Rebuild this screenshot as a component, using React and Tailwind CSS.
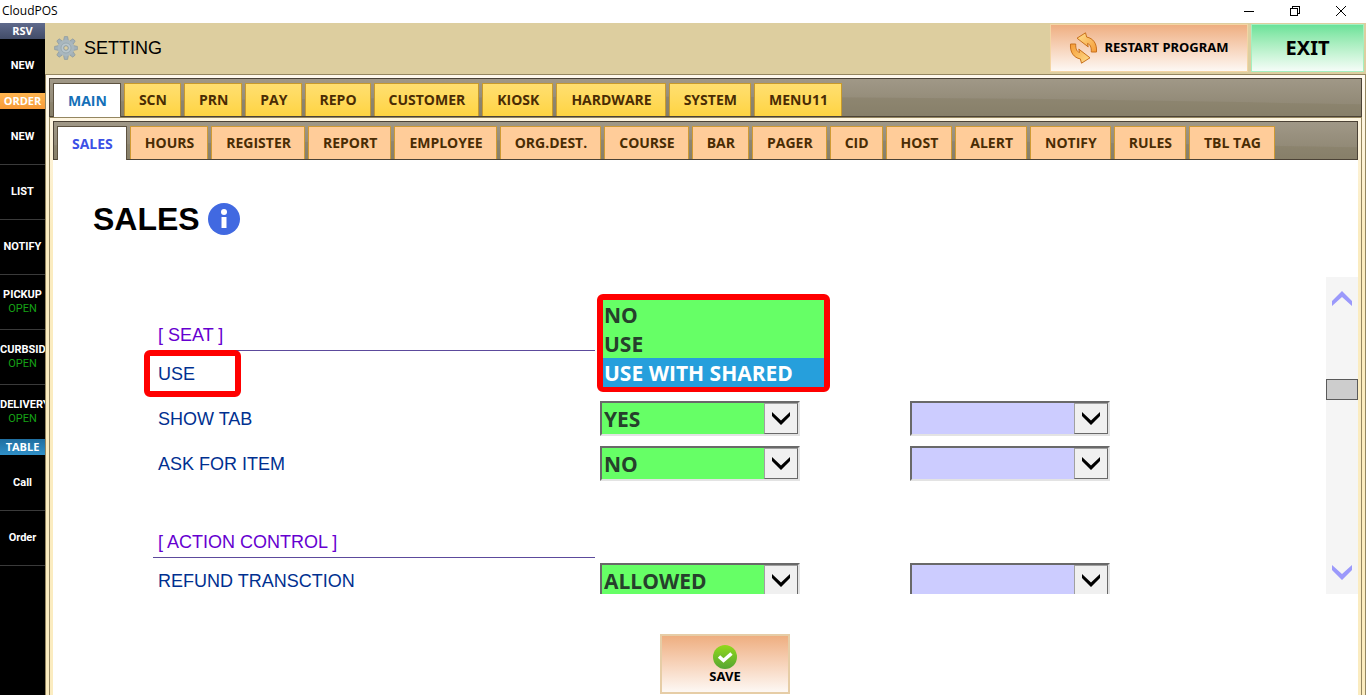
import React from "react";

const sideItems = [
  { header: "RSV", tone: "bg-linear-to-b from-[#5f6a8c] to-[#424c68]" },
  { label: "NEW", short: true, first: true },
  { header: "ORDER", tone: "bg-linear-to-b from-[#ffb54f] to-[#f79a38]" },
  { label: "NEW", first: true },
  { label: "LIST" },
  { label: "NOTIFY" },
  { label: "PICKUP", status: "OPEN" },
  { label: "CURBSIDE", status: "OPEN", wide: true },
  { label: "DELIVERY", status: "OPEN", wide: true },
  { header: "TABLE", tone: "bg-linear-to-b from-[#1f6ea0] to-[#3090c8]" },
  { label: "Call", first: true },
  { label: "Order" },
];

const mainTabs = ["MAIN", "SCN", "PRN", "PAY", "REPO", "CUSTOMER", "KIOSK", "HARDWARE", "SYSTEM", "MENU11"];

const subTabs = [
  "SALES", "HOURS", "REGISTER", "REPORT", "EMPLOYEE", "ORG.DEST.", "COURSE", "BAR",
  "PAGER", "CID", "HOST", "ALERT", "NOTIFY", "RULES", "TBL TAG",
];

function TitleBar() {
  return (
    <div className="flex h-[23px] shrink-0 items-start justify-between bg-white pr-0.5 pl-0.5 font-['Open_Sans',sans-serif] text-xs leading-[22px] text-black">
      <span>CloudPOS</span>
      <div className="flex h-[21px] items-center">
        <button aria-label="Minimize" className="flex h-full w-[46px] items-center justify-center">
          <svg width="10" height="10" viewBox="0 0 10 10" shapeRendering="crispEdges"><path d="M0 5.5h10" stroke="#000" /></svg>
        </button>
        <button aria-label="Restore" className="flex h-full w-[46px] items-center justify-center">
          <svg width="10" height="10" viewBox="0 0 10 10" fill="none" stroke="#000" shapeRendering="crispEdges">
            <path d="M.5 2.5h7v7h-7zM2.5 2.5v-2h7v7h-2" />
          </svg>
        </button>
        <button aria-label="Close" className="flex h-full w-[46px] items-center justify-center">
          <svg width="10" height="10" viewBox="0 0 10 10" stroke="#000"><path d="M0 0l10 10M10 0L0 10" /></svg>
        </button>
      </div>
    </div>
  );
}

function Sidebar() {
  return (
    <nav className="w-[45px] shrink-0 overflow-hidden bg-black text-center font-['Roboto',sans-serif] text-[11px] leading-[14px] font-bold text-white">
      {sideItems.map((item, i) =>
        item.header ? (
          <div key={i} className={`h-4 font-['Open_Sans',sans-serif] leading-4 ${item.tone}`}>{item.header}</div>
        ) : (
          <button
            key={i}
            className={`flex w-full flex-col justify-center font-bold ${item.wide ? "items-start" : "items-center"} ${item.short ? "h-[54px]" : "h-[55px]"} ${item.first ? "" : "border-t border-[#3a3a3a]"}`}
          >
            <span>{item.label}</span>
            {item.status && <span className="w-full text-center font-normal text-[#16a016]">{item.status}</span>}
          </button>
        )
      )}
      <div className="border-t border-[#3a3a3a]" />
    </nav>
  );
}

function GearIcon() {
  const teeth = [0, 45, 90, 135, 180, 225, 270, 315];
  return (
    <svg width="24" height="24" viewBox="0 0 24 24">
      <g fill="#a3b1b8" stroke="#82929a" strokeWidth=".6">
        {teeth.map((a) => (
          <path key={a} d="M9.6 4.5L10.4.6h3.2l.8 3.9z" transform={`rotate(${a} 12 12)`} />
        ))}
      </g>
      <circle cx="12" cy="12" r="8.3" fill="#a9b7be" />
      <circle cx="12" cy="12" r="5" fill="#b9c6cc" stroke="#93a3ab" strokeWidth=".8" />
      <circle cx="12" cy="12" r="2.3" fill="#ddce9f" stroke="#8c9ba3" />
    </svg>
  );
}

function RestartIcon() {
  const arrow = "M8 6.2L16.5.8l1.2 4.3C24 6.200 28.200 11.500 27.500 20h-5.200c.2-5-1.300-7.800-3.800-8.500l.7 3.400z";
  return (
    <svg width="29" height="32" viewBox="0 0 29 32">
      <defs>
        <linearGradient id="restart" x1="0" y1="0" x2="1" y2="1">
          <stop offset="0" stopColor="#ffe08e" />
          <stop offset="1" stopColor="#f59a35" />
        </linearGradient>
      </defs>
      <g fill="url(#restart)" stroke="#c8701c" strokeLinejoin="round">
        <path d={arrow} />
        <path d={arrow} transform="rotate(180 14.5 16)" />
      </g>
    </svg>
  );
}

function Header() {
  return (
    <header className="flex h-[51px] shrink-0 items-start justify-between bg-[#ddce9f] pt-px pr-0.5 pl-[9px]">
      <div className="flex h-12 items-center gap-1.5 text-lg text-black">
        <GearIcon />
        <span>SETTING</span>
      </div>
      <div className="flex gap-[3px] font-['Noto_Sans',sans-serif] font-bold text-black">
        <button className="flex h-12 w-[198px] items-center justify-center gap-1.5 border border-[#f3d5a4] bg-linear-to-b from-[#eeae80] to-[#fdf8f4] text-[13px]">
          <RestartIcon />
          RESTART PROGRAM
        </button>
        <button className="h-12 w-[113px] border border-[#a5efc0] bg-linear-to-b from-[#6ae299] to-[#f5fdf8] text-xl">EXIT</button>
      </div>
    </header>
  );
}

function BandSheen() {
  return (
    <svg className="absolute inset-0 h-full w-full" viewBox="0 0 1300 38" preserveAspectRatio="none" aria-hidden="true">
      <path d="M0 24C500 16 800 16 1300 26V38H0z" fill="#80785f" fillOpacity=".35" />
    </svg>
  );
}

function TabBand({ tabs, idle, activeText, box }) {
  return (
    <div className="relative shrink-0 border border-[#4b4236] bg-linear-to-b from-[#a09887] to-[#8b836f]">
      <BandSheen />
      <div role="tablist" className={`relative flex gap-[3px] pl-[3px] font-['Open_Sans',sans-serif] text-sm font-bold ${box}`}>
        {tabs.map((t, i) => (
          <button
            key={t}
            role="tab"
            aria-selected={i === 0}
            className={`border border-b-0 pr-[13px] pl-3.5 whitespace-nowrap ${i === 0 ? `-mb-px border-[#5d5240] bg-white ${activeText}` : idle}`}
          >
            {t}
          </button>
        ))}
      </div>
    </div>
  );
}

function ComboBox({ label, value, blank }) {
  return (
    <div className="relative flex h-[35px] border-2 border-t-[#696969] border-r-[#e3e3e3] border-b-[#e3e3e3] border-l-[#696969]">
      <select
        aria-label={label}
        defaultValue={value}
        className={`w-full appearance-none pt-px pl-0.5 font-['Open_Sans',sans-serif] text-[21px] leading-7 font-bold text-[#26402c] outline-none ${blank ? "bg-[#ccccff]" : "bg-[#66ff66]"}`}
      >
        <option>{value}</option>
      </select>
      <span className="pointer-events-none absolute inset-y-0 right-0 flex w-[34px] items-center justify-center border border-t-[#a0a0a0] border-r-[#696969] border-b-[#696969] border-l-[#a0a0a0] bg-[#f0f0f0]">
        <svg width="20" height="14" viewBox="0 0 20 14"><path d="M1 0l9 8.500 9-8.500v4l-9 9-9-9z" fill="#000" /></svg>
      </span>
    </div>
  );
}

const rowGrid = "grid h-[45px] shrink-0 grid-cols-[447px_200px_200px] items-center";

function SettingRow({ label, value }) {
  return (
    <div className={rowGrid}>
      <span className="pl-[5px] text-lg text-[#003090]">{label}</span>
      <ComboBox label={label} value={value} />
      <div className="ml-[110px] w-[200px]">
        <ComboBox label={`${label} option`} value="" blank />
      </div>
    </div>
  );
}

function SectionTitle({ children }) {
  return (
    <h2 className="flex h-[72px] w-[442px] shrink-0 items-end border-b border-[#5c4a9c] pb-px pl-[5px] text-lg text-[#6600d0]">
      {children}
    </h2>
  );
}

function OpenChoice() {
  const base = "block h-[29px] w-full pt-px pl-px text-left";
  return (
    <div
      role="listbox"
      aria-label="USE"
      className="absolute bottom-1 -left-[3px] z-10 h-[98px] w-[233px] rounded-md border-6 border-[#ff0000] bg-[#66ff66] font-['Open_Sans',sans-serif] text-[21px] leading-[29px] font-bold text-[#26402c]"
    >
      <button role="option" aria-selected="false" className={base}>NO</button>
      <button role="option" aria-selected="false" className={base}>USE</button>
      <button role="option" aria-selected="true" className={`${base} bg-[#269fdc] text-white`}>USE WITH SHARED</button>
    </div>
  );
}

function ScrollRail() {
  return (
    <div className="flex w-8 shrink-0 flex-col items-center justify-between bg-[#f5f5f5] py-3.5">
      <button aria-label="Scroll up">
        <svg width="20" height="15" viewBox="0 0 20 15"><path d="M0 10L10 0l10 10v5L10 6 0 15z" fill="#9b99fb" /></svg>
      </button>
      <div className="mb-[92px] h-[21px] w-8 border border-[#5a5a5a] bg-[#cdcdcd]" />
      <button aria-label="Scroll down">
        <svg width="20" height="15" viewBox="0 0 20 15"><path d="M0 5l10 10L20 5V0L10 9 0 0z" fill="#9b99fb" /></svg>
      </button>
    </div>
  );
}

function SalesPage() {
  return (
    <main className="flex min-h-0 flex-1 flex-col bg-white">
      <div className="flex h-[117px] shrink-0 items-center gap-2 pl-10">
        <h1 className="text-[32px] leading-10 font-bold text-black">SALES</h1>
        <svg width="32" height="32" viewBox="0 0 32 32" role="img" aria-label="Information">
          <circle cx="16" cy="16" r="16" fill="#4169e1" />
          <circle cx="16" cy="9" r="3" fill="#fff" />
          <path d="M13.500 14h5v11h-5z" fill="#fff" />
        </svg>
      </div>
      <div className="flex min-h-0 flex-1 justify-between">
        <div className="flex flex-1 flex-col overflow-hidden pt-0.5 pl-[100px]">
          <SectionTitle>[ SEAT ]</SectionTitle>
          <div className={rowGrid}>
            <div className="relative">
              <span className="pl-[5px] text-lg text-[#003090]">USE</span>
              <span className="absolute -top-[10px] -left-[9px] h-[47px] w-[97px] rounded-md border-6 border-[#ff0000]" />
            </div>
            <div className="relative h-full">
              <OpenChoice />
            </div>
          </div>
          <SettingRow label="SHOW TAB" value="YES" />
          <SettingRow label="ASK FOR ITEM" value="NO" />
          <SectionTitle>[ ACTION CONTROL ]</SectionTitle>
          <SettingRow label="REFUND TRANSCTION" value="ALLOWED" />
        </div>
        <ScrollRail />
      </div>
      <div className="flex shrink-0 justify-center pt-10 pb-px pl-[39px]">
        <button className="flex h-[60px] w-[130px] flex-col items-center justify-center border-2 border-[#e6cda6] bg-linear-to-b from-[#eeae80] to-[#fdf8f4] font-['Noto_Sans',sans-serif] text-[13px] leading-[15px] font-bold text-black">
          <svg width="24" height="24" viewBox="0 0 24 24">
            <defs>
              <linearGradient id="ok" x1="0" y1="0" x2="0" y2="1">
                <stop offset="0" stopColor="#92d91c" />
                <stop offset="1" stopColor="#55a532" />
              </linearGradient>
            </defs>
            <circle cx="12" cy="12" r="12" fill="url(#ok)" />
            <path d="M6 11.500l4.500 4 8-7" fill="none" stroke="#fff" strokeWidth="3.500" />
          </svg>
          SAVE
        </button>
      </div>
    </main>
  );
}

export default function App() {
  return (
    <div className="flex h-screen flex-col overflow-hidden bg-white font-['Liberation_Sans',sans-serif]">
      <TitleBar />
      <div className="flex min-h-0 flex-1">
        <Sidebar />
        <div className="flex min-w-0 flex-1 flex-col">
          <Header />
          <div className="flex min-h-0 flex-1 flex-col border border-b-0 border-[#948660] bg-linear-to-b from-[#fff9ee] to-[#fbecc0] to-25% px-[3px] pt-[3px]">
            <TabBand
              tabs={mainTabs}
              box="h-[37px] pt-1"
              activeText="text-[#1470b8]"
              idle="border-[#c89a2c] bg-linear-to-b from-[#ffdf70] to-[#ffd440] text-[#4a2c04]"
            />
            <div className="flex min-h-0 flex-1 flex-col border-x border-t border-[#948660] px-[3px] pt-[3px]">
              <TabBand
                tabs={subTabs}
                box="h-[37px] pt-1"
                activeText="text-[#3c50e6]"
                idle="border-[#cf9a34] bg-[#ffcc99] text-[#4a2c04]"
              />
              <SalesPage />
            </div>
          </div>
        </div>
      </div>
    </div>
  );
}
